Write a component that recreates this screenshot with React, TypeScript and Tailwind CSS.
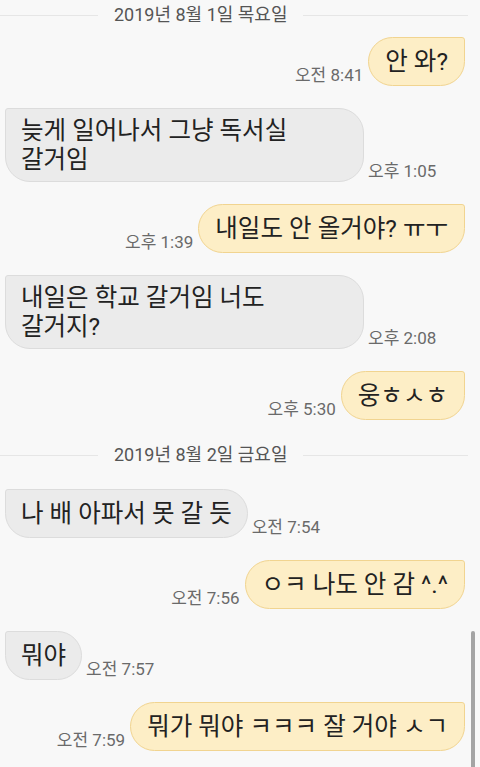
import React from "react";

type Msg =
  | { kind: "date"; text: string; cls: string }
  | { kind: "out" | "in"; text: string; time: string; cls: string };

const FONT = { fontFamily: "Roboto, 'Noto Sans CJK KR', sans-serif" };

const items: Msg[] = [
  { kind: "date", text: "2019년 8월 1일 목요일", cls: "h-[30px]" },
  { kind: "out", text: "안 와?", time: "오전 8:41", cls: "mt-[7px]" },
  { kind: "in", text: "늦게 일어나서 그냥 독서실 갈거임", time: "오후 1:05", cls: "mt-[22px]" },
  { kind: "out", text: "내일도 안 올거야? ㅠㅜ", time: "오후 1:39", cls: "mt-[22px]" },
  { kind: "in", text: "내일은 학교 갈거임 너도 갈거지?", time: "오후 2:08", cls: "mt-[22px]" },
  { kind: "out", text: "웅ㅎㅅㅎ", time: "오후 5:30", cls: "mt-[22px]" },
  { kind: "date", text: "2019년 8월 2일 금요일", cls: "h-[30px] mt-[20px]" },
  { kind: "in", text: "나 배 아파서 못 갈 듯", time: "오전 7:54", cls: "mt-[19px]" },
  { kind: "out", text: "ㅇㅋ 나도 안 감 ^.^", time: "오전 7:56", cls: "mt-[22px]" },
  { kind: "in", text: "뭐야", time: "오전 7:57", cls: "mt-[22px]" },
  { kind: "out", text: "뭐가 뭐야 ㅋㅋㅋ 잘 거야 ㅅㄱ", time: "오전 7:59", cls: "mt-[22px]" },
];

function Time({ t }: { t: string }) {
  return (
    <span className="shrink-0 text-[17px] leading-[17px] text-[#6a6a6a] mb-[2px] whitespace-nowrap">
      {t}
    </span>
  );
}

export default function App() {
  return (
    <div className="relative w-[480px] h-[767px] overflow-hidden bg-[#f8f8f8]" style={FONT}>
      <div className="flex flex-col">
        {items.map((m, i) => {
          if (m.kind === "date") {
            return (
              <div key={i} className={`flex items-center ${m.cls}`}>
                <div className="w-[98px] h-px bg-[#e6e6e6]" />
                <span className="px-[16px] text-[18px] leading-[20px] text-[#555555] whitespace-nowrap">
                  {m.text}
                </span>
                <div className="flex-1 h-px bg-[#e6e6e6] mr-[12px]" />
              </div>
            );
          }
          if (m.kind === "out") {
            return (
              <div key={i} className={`flex justify-end items-end gap-[5px] pr-[15px] ${m.cls}`}>
                <Time t={m.time} />
                <div className="min-h-[49px] flex items-center px-[16px] py-[9px] bg-[#fdeec6] border border-[#f1d490] rounded-[25px] rounded-tr-[3px] text-[24.5px] leading-[29px] text-[#222222] break-keep">
                  {m.text}
                </div>
              </div>
            );
          }
          return (
            <div key={i} className={`flex justify-start items-end gap-[4px] pl-[5px] ${m.cls}`}>
              <div className="max-w-[359px] min-h-[49px] flex items-center px-[15px] py-[7px] bg-[#ebebeb] border border-[#dcdcdc] rounded-[25px] rounded-tl-[3px] text-[24.5px] leading-[29px] text-[#222222] break-keep">
                {m.text}
              </div>
              <Time t={m.time} />
            </div>
          );
        })}
      </div>
      <div className="absolute right-[5px] top-[631px] w-[4px] h-[140px] rounded-t-[2px] bg-[#a4a4a4]" />
    </div>
  );
}
